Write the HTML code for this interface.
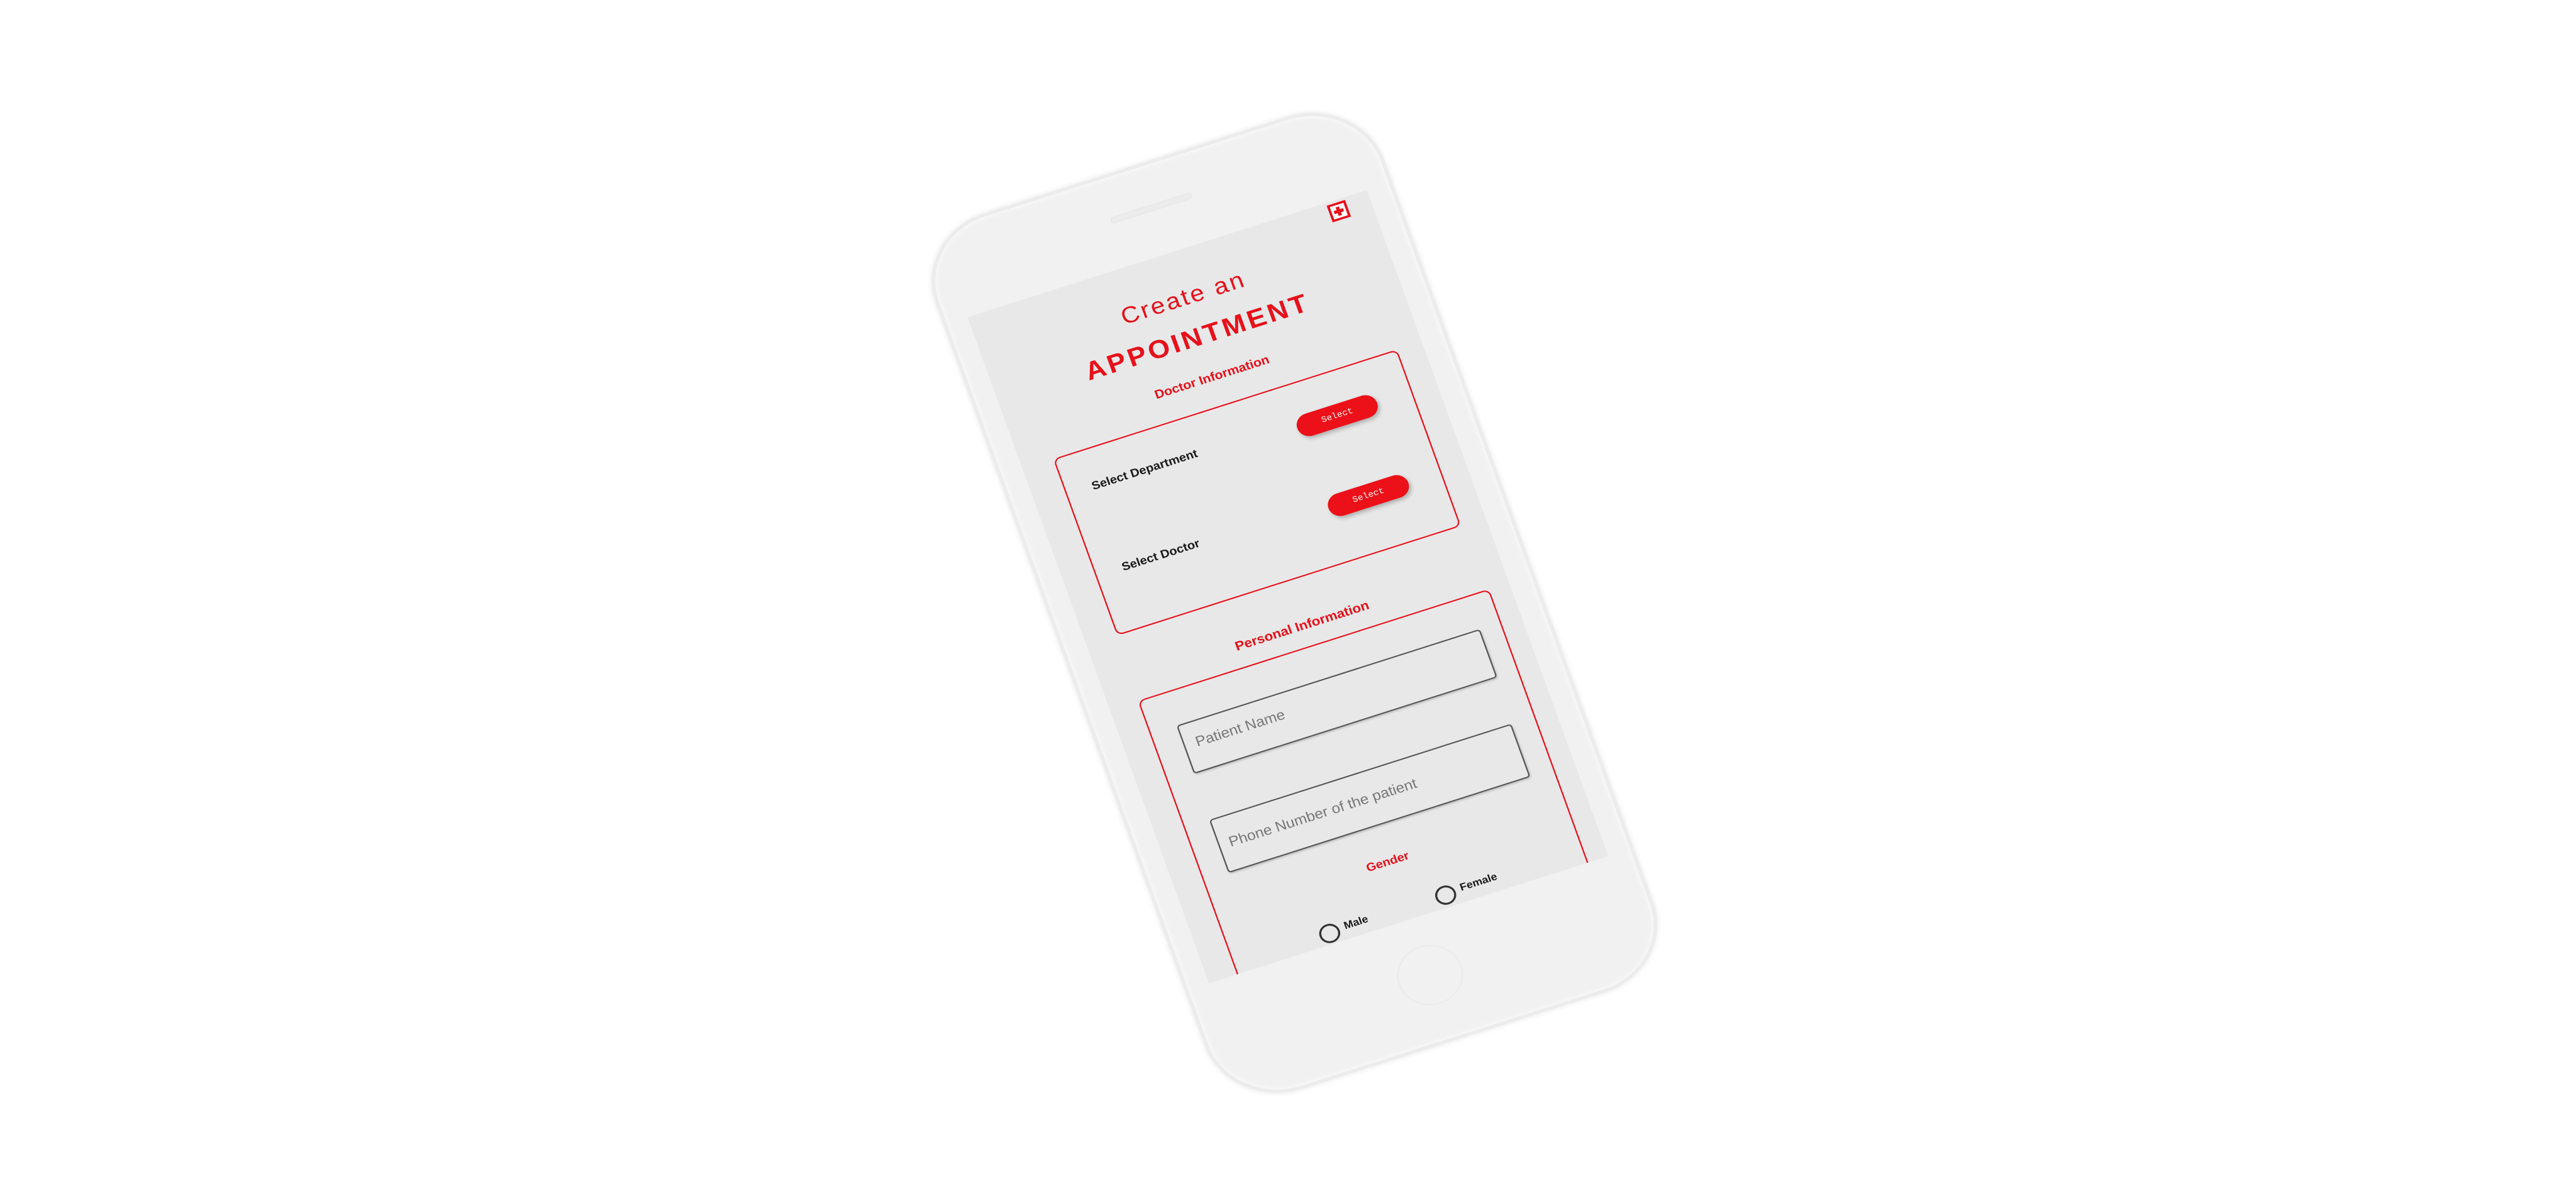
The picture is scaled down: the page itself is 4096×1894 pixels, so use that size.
<!DOCTYPE html>
<html><head><meta charset="utf-8"><style>
html,body{margin:0;padding:0;background:#fff;width:4096px;height:1894px;overflow:hidden;font-family:"Liberation Sans",sans-serif}
#w{position:absolute;left:0;top:0;width:600px;height:1100px;transform-origin:0 0;transform:matrix(1.058,-0.337,0.349,0.963,1538.5,504.5)}
.body{position:absolute;left:-36px;top:-146px;width:664px;height:1436px;border-radius:110px;background:#f1f1f1;border:5px solid #ececec;box-shadow:0 0 8px rgba(0,0,0,0.10),inset 0 0 10px rgba(255,255,255,0.9)}
.spk{position:absolute;left:240px;top:-80px;width:120px;height:8px;border-radius:5px;background:#ececec;border:1px solid #e4e4e4}
.home{position:absolute;left:255px;top:1145px;width:90px;height:90px;border-radius:50%;border:2px solid #ebebeb}
.scr{position:absolute;left:0;top:0;width:600px;height:1100px;background:#e8e8e8;overflow:hidden}
.red{color:#e8101a}
.c{position:absolute;left:0;width:600px;text-align:center}
.box{position:absolute;border:2.5px solid #e8101a;border-radius:10px}
.lbl{position:absolute;font-weight:bold;font-size:18px;color:#1a1a1a}
.btn{position:absolute;width:120px;height:36px;border-radius:18px;background:#ec1018;color:#fff;font-family:"Liberation Mono",monospace;font-size:13px;text-align:center;line-height:36px;box-shadow:2px 4px 6px rgba(0,0,0,0.25)}
.inp{position:absolute;border:2px solid #555;border-radius:5px;box-shadow:1px 2px 3px rgba(0,0,0,0.2)}
.ph{position:absolute;font-size:22px;color:#777}
.rad{position:absolute;width:24px;height:24px;border:3px solid #333;border-radius:50%}
</style></head><body>
<div id="w">
 <div class="body"></div>
 <div class="spk"></div>
 <div class="home"></div>
 <div class="scr">
  <svg style="position:absolute;left:538px;top:4px" width="28" height="28" viewBox="0 0 28 28"><rect x="2" y="2" width="24" height="24" fill="#fff" stroke="#e8101a" stroke-width="3.5"/><path d="M14 7v14M7 14h14" stroke="#e8101a" stroke-width="5"/></svg>
  <div class="c red" style="top:52px;font-size:36px;letter-spacing:3px">Create an</div>
  <div class="c red" style="top:116px;font-size:40px;font-weight:bold;letter-spacing:4px">APPOINTMENT</div>
  <div class="c red" style="top:194px;font-size:19px;font-weight:bold">Doctor Information</div>
  <div class="box" style="left:46px;top:250px;width:513px;height:288px"></div>
  <div class="lbl" style="left:85px;top:299px">Select Department</div>
  <div class="btn" style="left:390px;top:302px">Select</div>
  <div class="lbl" style="left:86px;top:433px">Select Doctor</div>
  <div class="btn" style="left:393px;top:435px">Select</div>
  <div class="c red" style="top:604px;font-size:20px;font-weight:bold">Personal Information</div>
  <div class="box" style="left:42px;top:648px;width:524px;height:600px"></div>
  <div class="inp" style="left:82px;top:703px;width:452px;height:76px"></div>
  <div class="ph" style="left:100px;top:724px">Patient Name</div>
  <div class="inp" style="left:80px;top:858px;width:450px;height:84px"></div>
  <div class="ph" style="left:96px;top:888px">Phone Number of the patient</div>
  <div class="c red" style="top:994px;font-size:18px;font-weight:bold">Gender</div>
  <div class="rad" style="left:172px;top:1068px"></div>
  <div class="lbl" style="left:210px;top:1071px;font-size:16px">Male</div>
  <div class="rad" style="left:347px;top:1066px"></div>
  <div class="lbl" style="left:385px;top:1069px;font-size:16px">Female</div>
 </div>
</div>
</body></html>
